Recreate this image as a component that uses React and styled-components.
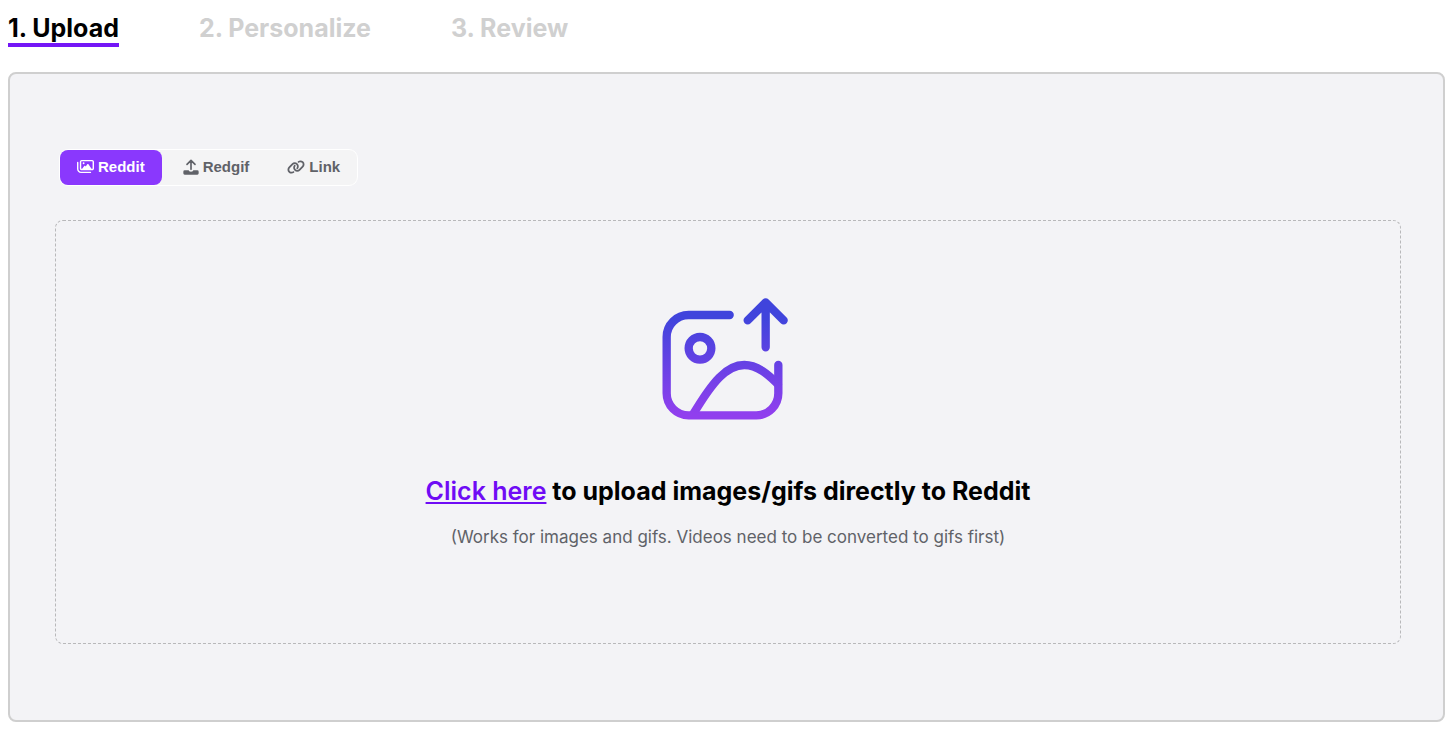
import React, { useState } from "react";
import styled, { createGlobalStyle } from "styled-components";
import { FaRegImages, FaLink } from "react-icons/fa6";

const GlobalStyle = createGlobalStyle`
  * { box-sizing: border-box; }
  body {
    margin: 0;
    background: #fff;
    color: #000;
    font-family: Inter, "Liberation Sans", sans-serif;
  }
`;

const Page = styled.main`
  padding: 13px 11px 14px 8px;
`;

const Steps = styled.ol`
  display: flex;
  align-items: flex-start;
  gap: 80px;
  margin: 0 0 25px;
  padding: 0;
  list-style: none;
`;

const Step = styled.li`
  border-bottom: 4px solid ${(p) => (p.$active ? "#7416f6" : "transparent")};
  color: ${(p) => (p.$active ? "#000" : "#d0d0d0")};
  font-size: 25px;
  font-weight: 700;
  line-height: 30px;
  white-space: nowrap;
`;

const Panel = styled.section`
  padding: 75px 42px 76px 45px;
  border: 2px solid #cfcfcf;
  border-radius: 8px;
  background: #f3f3f6;
`;

const Sources = styled.div`
  display: inline-flex;
  gap: 4px;
  margin: 0 0 34px 4px;
  border: 1px solid #fff;
  border-radius: 9px;
  background: #f4f4f5;
  vertical-align: top;
`;

const SourceButton = styled.button`
  display: flex;
  align-items: center;
  gap: 4px;
  height: 35px;
  padding: 0 17px 2px;
  border: 0;
  border-radius: 8px;
  background: ${(p) => (p.$active ? "#8a38fd" : "transparent")};
  color: ${(p) => (p.$active ? "#fff" : "#606268")};
  font-family: "Liberation Sans", Arial, sans-serif;
  font-size: 15px;
  font-weight: 700;
  line-height: 20px;
  cursor: pointer;

  svg {
    flex: none;
  }
`;

const DropZone = styled.div`
  display: flex;
  flex-direction: column;
  align-items: center;
  padding: 64px 24px 94px;
  border: 1px dashed #b8b8ba;
  border-radius: 8px;
  text-align: center;
`;

const Title = styled.h1`
  margin: 40px 0 0;
  font-size: 25px;
  font-weight: 700;
  line-height: 32px;
`;

const UploadLink = styled.a`
  color: #6f0bf5;
  font-weight: 600;
  text-decoration: underline;
  text-decoration-thickness: 2px;
  text-underline-offset: 2px;
`;

const Hint = styled.p`
  margin: 18px 0 0;
  color: #606268;
  font-size: 17px;
  line-height: 24px;
`;

function TrayUploadIcon() {
  return (
    <svg width="16" height="16" viewBox="0 0 48 48" aria-hidden="true">
      <path
        d="M24 31V5M12 16L24 4l12 12"
        fill="none"
        stroke="currentColor"
        strokeWidth="5"
        strokeLinecap="round"
        strokeLinejoin="round"
      />
      <path
        d="M5 34H17a7 4 0 0 0 7 4a7 4 0 0 0 7-4H43a4 4 0 0 1 4 4v5a4 4 0 0 1-4 4H5a4 4 0 0 1-4-4v-5a4 4 0 0 1 4-4z"
        fill="currentColor"
      />
    </svg>
  );
}

function ImageUploadIcon() {
  return (
    <svg width="150" height="150" viewBox="9 0 450 450" overflow="visible" aria-hidden="true">
      <defs>
        <linearGradient id="uploadStroke" gradientUnits="userSpaceOnUse" x1="0" y1="100" x2="0" y2="390">
          <stop offset="0" stopColor="#4044dc" />
          <stop offset="1" stopColor="#913fee" />
        </linearGradient>
      </defs>
      <g fill="none" stroke="url(#uploadStroke)" strokeWidth="25" strokeLinecap="round" strokeLinejoin="round">
        <path d="M239 90H116a66 66 0 0 0-66 66V325a66 66 0 0 0 66 66H319a66 66 0 0 0 66-66V240" />
        <circle cx="150" cy="190" r="34" />
        <path d="M130 387C188 290 230 240 283 240C322 240 355 269 384 298" />
        <path d="M347 187V52M293 106L347 52L401 106" />
      </g>
    </svg>
  );
}

const steps = ["1. Upload", "2. Personalize", "3. Review"];

const sources = [
  { name: "Reddit", icon: <FaRegImages size={17} /> },
  { name: "Redgif", icon: <TrayUploadIcon /> },
  { name: "Link", icon: <FaLink size={18} /> },
];

export default function App() {
  const [source, setSource] = useState("Reddit");
  return (
    <>
      <GlobalStyle />
      <Page>
        <Steps>
          {steps.map((step, i) => (
            <Step key={step} $active={i === 0} aria-current={i === 0 ? "step" : undefined}>
              {step}
            </Step>
          ))}
        </Steps>
        <Panel>
          <Sources>
            {sources.map(({ name, icon }) => (
              <SourceButton
                key={name}
                type="button"
                $active={source === name}
                aria-pressed={source === name}
                onClick={() => setSource(name)}
              >
                {icon}
                {name}
              </SourceButton>
            ))}
          </Sources>
          <DropZone>
            <ImageUploadIcon />
            <Title>
              <UploadLink href="#upload">Click here</UploadLink> to upload images/gifs directly to Reddit
            </Title>
            <Hint>(Works for images and gifs. Videos need to be converted to gifs first)</Hint>
          </DropZone>
        </Panel>
      </Page>
    </>
  );
}
